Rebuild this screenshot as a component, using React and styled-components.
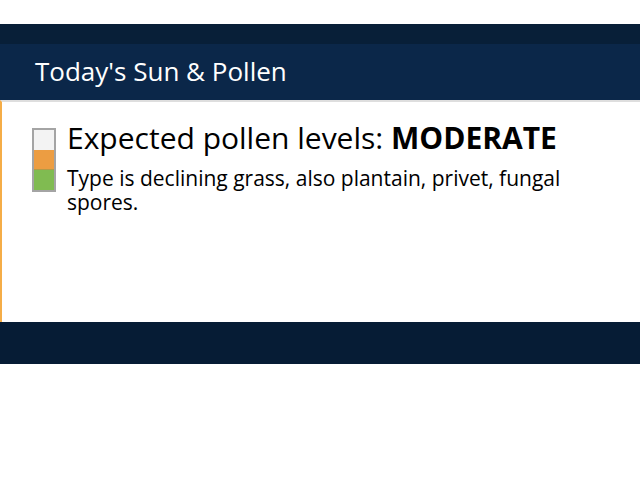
import React from "react";
import styled, { createGlobalStyle } from "styled-components";

const Global = createGlobalStyle`
  html, body { margin: 0; padding: 0; background: #fff; }
  body { font-family: "Open Sans", "Liberation Sans", sans-serif; }
`;

const Page = styled.div`
  padding-top: 24px;
`;

const TopBand = styled.div`
  height: 20px;
  background: #081f38;
`;

const Header = styled.header`
  height: 56px;
  background: #0b2749;
  display: flex;
  align-items: center;
  padding-left: 35px;
`;

const Title = styled.h2`
  margin: 0;
  color: #fff;
  font-size: 26px;
  font-weight: 400;
  line-height: 1;
  padding-bottom: 2px;
`;

const Panel = styled.section`
  height: 222px;
  box-sizing: border-box;
  border-top: 2px solid #dedede;
  border-left: 2px solid #f5ad47;
  padding: 26px 20px 0 30px;
`;

const Row = styled.div`
  display: flex;
  align-items: flex-start;
  gap: 11px;
`;

const Meter = styled.div`
  width: 20px;
  border: 2px solid #a4a4a4;
  display: flex;
  flex-direction: column;
  flex: none;
`;

const Segment = styled.div`
  height: ${(p) => (p.$divider ? 19 : 20)}px;
  background: ${(p) => p.$color};
  border-bottom: ${(p) => (p.$divider ? `1px solid ${p.$divider}` : "none")};
`;

const Text = styled.div`
  color: #000;
`;

const Level = styled.div`
  font-size: 30px;
  line-height: 32px;
  margin-top: -6px;
  b { font-weight: 700; }
`;

const Desc = styled.p`
  margin: 12px 0 0;
  font-size: 21px;
  line-height: 24px;
`;

const Footer = styled.div`
  height: 42px;
  background: #061c35;
`;

export default function App() {
  return (
    <>
      <Global />
      <Page>
        <TopBand />
        <Header>
          <Title>Today's Sun &amp; Pollen</Title>
        </Header>
        <Panel>
          <Row>
            <Meter>
              <Segment $color="#f3f3f3" />
              <Segment $color="#ec9d42" $divider="#b49a48" />
              <Segment $color="#80bb51" />
            </Meter>
            <Text>
              <Level>
                Expected pollen levels: <b>MODERATE</b>
              </Level>
              <Desc>Type is declining grass, also plantain, privet, fungal spores.</Desc>
            </Text>
          </Row>
        </Panel>
        <Footer />
      </Page>
    </>
  );
}
